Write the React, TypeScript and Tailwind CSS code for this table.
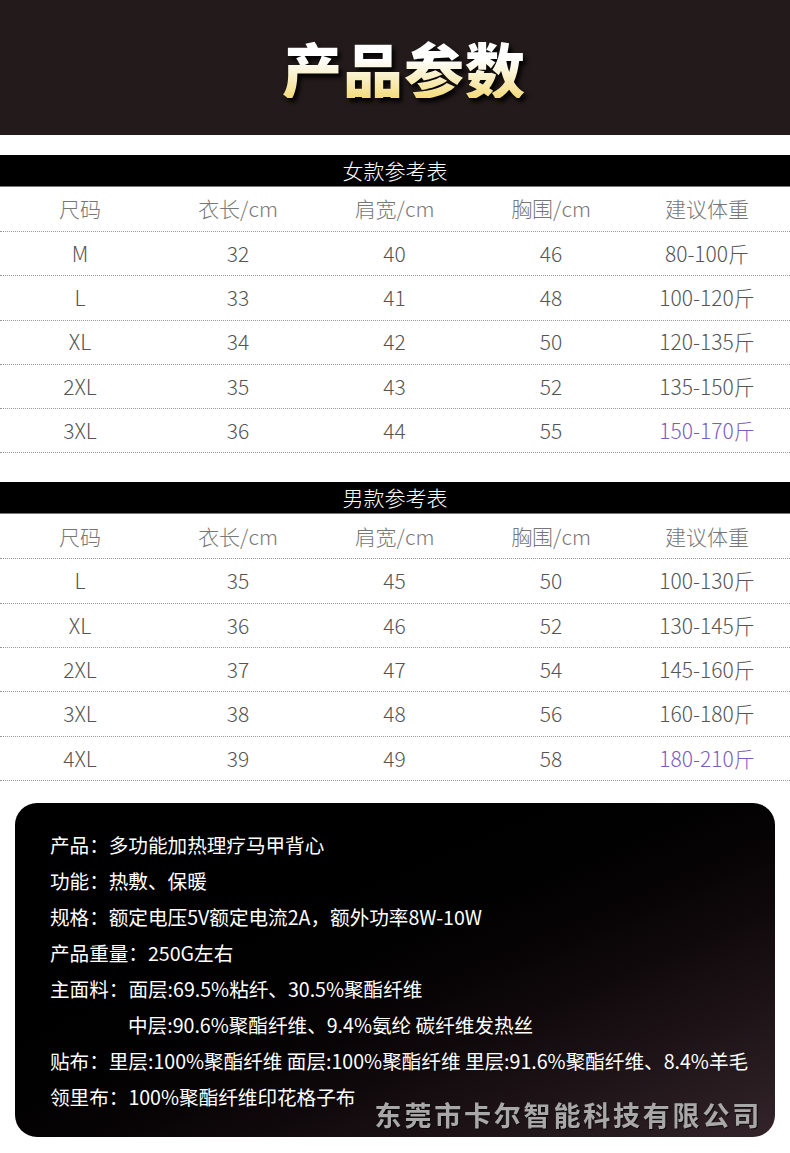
import React from "react";

interface SizeRow {
  size: string;
  length: string;
  shoulder: string;
  chest: string;
  weight: string;
}

const womenRows: SizeRow[] = [
  { size: "M", length: "32", shoulder: "40", chest: "46", weight: "80-100斤" },
  { size: "L", length: "33", shoulder: "41", chest: "48", weight: "100-120斤" },
  { size: "XL", length: "34", shoulder: "42", chest: "50", weight: "120-135斤" },
  { size: "2XL", length: "35", shoulder: "43", chest: "52", weight: "135-150斤" },
  { size: "3XL", length: "36", shoulder: "44", chest: "55", weight: "150-170斤" },
];

const menRows: SizeRow[] = [
  { size: "L", length: "35", shoulder: "45", chest: "50", weight: "100-130斤" },
  { size: "XL", length: "36", shoulder: "46", chest: "52", weight: "130-145斤" },
  { size: "2XL", length: "37", shoulder: "47", chest: "54", weight: "145-160斤" },
  { size: "3XL", length: "38", shoulder: "48", chest: "56", weight: "160-180斤" },
  { size: "4XL", length: "39", shoulder: "49", chest: "58", weight: "180-210斤" },
];

const headers = ["尺码", "衣长/cm", "肩宽/cm", "胸围/cm", "建议体重"];

const SizeTable: React.FC<{ title: string; rows: SizeRow[] }> = ({ title, rows }) => {
  return (
    <div>
      {/* Title bar */}
      <div className="h-[32px] bg-black border-b border-[#777] flex items-center justify-center text-[21px] text-white font-light leading-none">
        {title}
      </div>
      {/* Header row */}
      <div className="grid grid-cols-[160px_156px_157px_156px_156px] h-[45px] items-center text-center text-[21px] text-[#777] font-light border-b border-dotted border-[#999]">
        {headers.map((h) => (
          <div key={h}>{h}</div>
        ))}
      </div>
      {rows.map((r, i) => (
        <div
          key={r.size}
          className="grid grid-cols-[160px_156px_157px_156px_156px] h-[44.3px] items-center text-center text-[21px] text-[#555] font-light border-b border-dotted border-[#999]"
        >
          <div>{r.size}</div>
          <div>{r.length}</div>
          <div>{r.shoulder}</div>
          <div>{r.chest}</div>
          <div className={i === rows.length - 1 ? "text-[#7c5cbf]" : ""}>{r.weight}</div>
        </div>
      ))}
    </div>
  );
};

const specLines: { label: string; text: string; indent?: boolean }[] = [
  { label: "产品：", text: "多功能加热理疗马甲背心" },
  { label: "功能：", text: "热敷、保暖" },
  { label: "规格：", text: "额定电压5V额定电流2A，额外功率8W-10W" },
  { label: "产品重量：", text: "250G左右" },
  { label: "主面料：", text: "面层:69.5%粘纤、30.5%聚酯纤维" },
  { label: "", text: "中层:90.6%聚酯纤维、9.4%氨纶 碳纤维发热丝", indent: true },
  { label: "贴布：", text: "里层:100%聚酯纤维 面层:100%聚酯纤维 里层:91.6%聚酯纤维、8.4%羊毛" },
  { label: "领里布：", text: "100%聚酯纤维印花格子布" },
];

export default function App() {
  return (
    <div
      className="w-[790px] h-[1153px] bg-white overflow-hidden"
      style={{ fontFamily: '"Noto Sans CJK SC", "Noto Sans", sans-serif' }}
    >
      {/* Banner */}
      <div className="h-[135px] bg-[#231a1b] flex items-center justify-center pl-[18px]">
        <h1 className="drop-shadow-[3px_4px_2px_rgba(0,0,0,0.9)]">
          <span className="block text-[60px] font-black leading-none tracking-[1px] bg-linear-to-b from-white from-35% to-[#f3dc7a] bg-clip-text text-transparent">
            产品参数
          </span>
        </h1>
      </div>

      <div className="h-[20px]" />
      <SizeTable title="女款参考表" rows={womenRows} />

      <div className="h-[29px]" />
      <SizeTable title="男款参考表" rows={menRows} />

      {/* Spec card */}
      <div className="px-[15px] pt-[22px]">
        <div className="relative h-[334px] rounded-[22px] bg-linear-to-br from-black from-25% to-[#33242a] pl-[35px] pt-[24px]">
          {specLines.map((l, i) => (
            <div key={i} className="h-[36px] flex items-center text-[19.6px] text-white leading-none">
              {l.indent ? <span className="w-[78px]" /> : <span>{l.label}</span>}
              <span>{l.text}</span>
            </div>
          ))}
          <div className="absolute right-[13px] bottom-[9px] text-[27px] font-bold tracking-[2.8px] text-[#a8a8a8] leading-none drop-shadow-[1px_1px_0_rgba(0,0,0,0.6)]">
            东莞市卡尔智能科技有限公司
          </div>
        </div>
      </div>
    </div>
  );
}
